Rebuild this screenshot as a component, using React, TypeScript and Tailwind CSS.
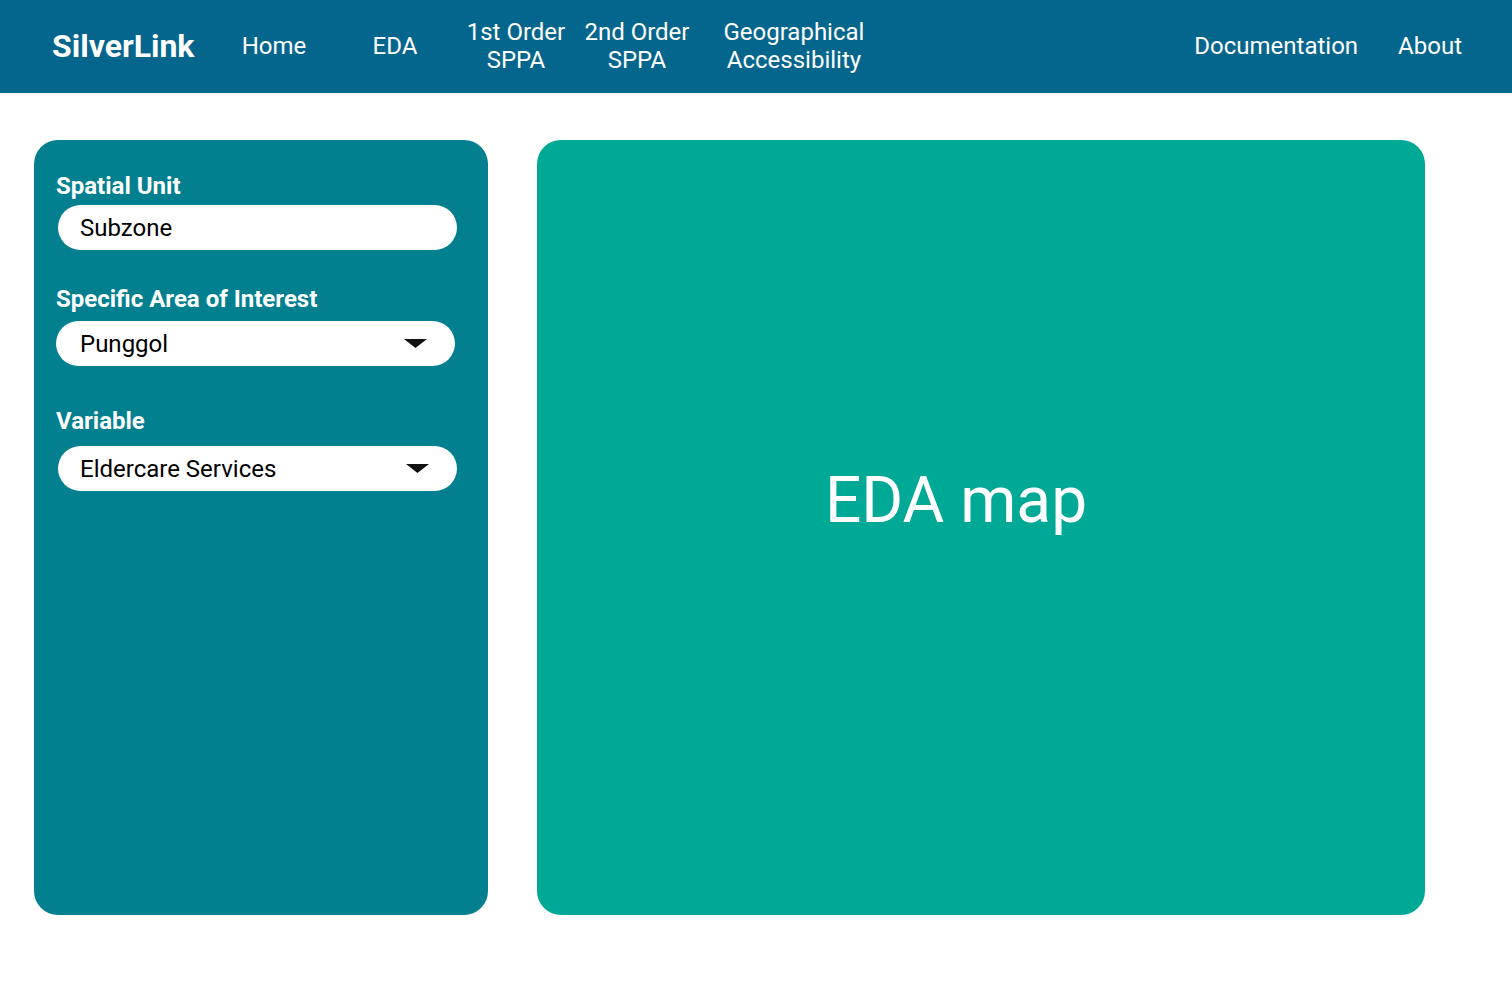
import { useState } from "react";

const navItems = [
  { label: ["Home"], width: "w-[121px]" },
  { label: ["EDA"], width: "w-[121px]" },
  { label: ["1st Order", "SPPA"], width: "w-[121px]" },
  { label: ["2nd Order", "SPPA"], width: "w-[121px]" },
  { label: ["Geographical", "Accessibility"], width: "w-[193px]" },
];

const Caret = () => (
  <svg width="23" height="9" viewBox="0 0 23 9" className="shrink-0">
    <path d="M0 0 H23 L11.5 9 Z" fill="#111" />
  </svg>
);

const Field = ({ value, select, pad = "pl-[22px]" }: { value: string; select?: boolean; pad?: string }) => (
  <div className={`flex h-[45px] w-[399px] items-center justify-between rounded-full bg-white ${pad} pr-[28px] text-[24px] text-black`}>
    <span>{value}</span>
    {select && <Caret />}
  </div>
);

export default function App() {
  const [active] = useState("EDA");

  return (
    <div className="min-h-screen bg-white font-['Roboto','Liberation_Sans',sans-serif]">
      {/* Navbar */}
      <nav className="flex h-[93px] items-center bg-[#05668D] pb-[2px] text-white">
        <div className="ml-[52px] mr-[19px] text-[32px] font-bold leading-none">SilverLink</div>
        {navItems.map((item) => (
          <div
            key={item.label.join(" ")}
            className={`${item.width} flex flex-col items-center text-center text-[24px] leading-[28px]`}
            data-active={item.label[0] === active}
          >
            {item.label.map((line) => (
              <span key={line}>{line}</span>
            ))}
          </div>
        ))}
        <div className="ml-auto flex items-center gap-10 pr-[50px] text-[24px]">
          <span>Documentation</span>
          <span>About</span>
        </div>
      </nav>

      {/* Body */}
      <main className="flex gap-[49px] pl-[34px] pt-[47px]">
        {/* Controls */}
        <aside className="h-[775px] w-[454px] rounded-[24px] bg-[#028090] pl-[22px] pt-[33px] text-white">
          <div className="text-[24px] font-bold leading-[26px]">Spatial Unit</div>
          <div className="ml-[2px] mt-[6px]">
            <Field value="Subzone" />
          </div>

          <div className="mt-[36px] text-[24px] font-bold leading-[26px]">Specific Area of Interest</div>
          <div className="mt-[9px]">
            <Field value="Punggol" select pad="pl-[24px]" />
          </div>

          <div className="mt-[42px] text-[24px] font-bold leading-[26px]">Variable</div>
          <div className="ml-[2px] mt-[12px]">
            <Field value="Eldercare Services" select />
          </div>
        </aside>

        {/* Map placeholder */}
        <section className="flex h-[775px] w-[888px] items-center justify-center rounded-[24px] bg-[#00A896] pb-[54px] pr-[50px]">
          <span className="text-[64px] text-white">EDA map</span>
        </section>
      </main>
    </div>
  );
}
